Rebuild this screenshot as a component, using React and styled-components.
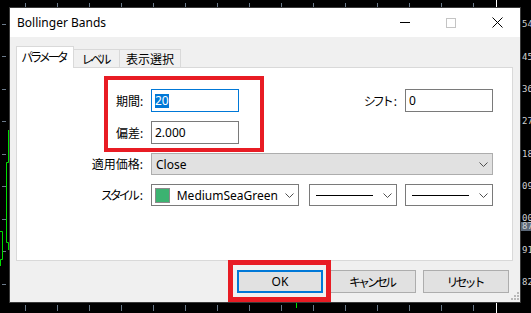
import React from 'react';
import styled, { createGlobalStyle } from 'styled-components';

const UI_FONT = `"Noto Sans", "Noto Sans CJK JP", sans-serif`;

const GlobalStyle = createGlobalStyle`
  html, body { margin: 0; padding: 0; background: #000; }
  body { width: 531px; height: 313px; overflow: hidden; font-family: ${UI_FONT}; }
`;

const Desktop = styled.div`
  position: relative;
  width: 531px;
  height: 313px;
  background: #000;
  overflow: hidden;
`;

const ChartLayer = styled.svg`
  position: absolute;
  left: 0;
  top: 0;
`;

const PriceLabel = styled.span`
  position: absolute;
  left: 521px;
  font-family: "DejaVu Sans Mono", monospace;
  font-size: 9px;
  line-height: 9px;
  padding: 0 1px;
  color: #d0d0d0;
  background: ${(p) => (p.$active ? '#5b6878' : 'transparent')};
`;

const Dialog = styled.div`
  position: absolute;
  left: 9px;
  top: 7px;
  width: 512px;
  height: 296px;
  box-sizing: border-box;
  border: 1px solid #3a3a3a;
  background: #f0f0f0;
  display: flex;
  flex-direction: column;
  font-family: ${UI_FONT};
  font-size: 12px;
  color: #000;
`;

const Kana = styled.span`
  letter-spacing: -3px;
  margin-right: 3px;
`;

const TitleBar = styled.div`
  height: 29px;
  background: #fff;
  display: flex;
  align-items: center;
`;

const Title = styled.div`
  flex: 1;
  padding-left: 7px;
  font-size: 12px;
`;

const CaptionButton = styled.div`
  width: 46px;
  height: 29px;
  display: flex;
  align-items: center;
  justify-content: center;
`;

const Body = styled.div`
  flex: 1;
  display: flex;
  flex-direction: column;
  padding: 9px 7px 0 6px;
`;

const TabStrip = styled.div`
  display: flex;
  align-items: flex-end;
  height: 21px;
`;

const Tab = styled.div`
  box-sizing: border-box;
  width: ${(p) => p.$w}px;
  height: ${(p) => (p.$active ? 22 : 18)}px;
  margin-bottom: ${(p) => (p.$active ? -1 : 0)}px;
  margin-left: ${(p) => (p.$first ? 0 : -1)}px;
  position: relative;
  z-index: ${(p) => (p.$active ? 2 : 1)};
  background: ${(p) => (p.$active ? '#fff' : '#f0f0f0')};
  border: 1px solid #d9d9d9;
  border-bottom: none;
  display: flex;
  align-items: center;
  justify-content: center;
  padding-bottom: ${(p) => (p.$active ? 2 : 0)}px;
  white-space: nowrap;
`;

const Panel = styled.div`
  box-sizing: border-box;
  height: 194px;
  background: #fff;
  border: 1px solid #d9d9d9;
  padding: 21px 19px 0 0;
  display: flex;
  flex-direction: column;
  gap: 9px;
`;

const Row = styled.div`
  display: flex;
  align-items: center;
  height: ${(p) => p.$h}px;
`;

const Label = styled.span`
  box-sizing: border-box;
  width: ${(p) => (p.$w ? `${p.$w}px` : 'auto')};
  text-align: ${(p) => p.$align || 'left'};
  padding-left: ${(p) => p.$pl || 0}px;
  padding-right: ${(p) => p.$pr || 0}px;
  white-space: nowrap;
`;

const Spacer = styled.div`
  flex: 1;
`;

const TextBox = styled.div`
  box-sizing: border-box;
  width: ${(p) => p.$w}px;
  height: 100%;
  background: #fff;
  border: 1px solid ${(p) => (p.$focused ? '#0078d7' : '#7a7a7a')};
  display: flex;
  align-items: center;
  padding-left: 3px;
`;

const Selected = styled.span`
  background: #0078d7;
  color: #fff;
  line-height: 14px;
`;

const ComboBox = styled.div`
  box-sizing: border-box;
  width: ${(p) => (p.$w ? `${p.$w}px` : 'auto')};
  flex: ${(p) => (p.$w ? 'none' : 1)};
  margin-left: ${(p) => p.$ml || 0}px;
  height: 100%;
  background: ${(p) => (p.$gray ? '#e1e1e1' : '#fff')};
  border: 1px solid ${(p) => (p.$gray ? '#adadad' : '#7a7a7a')};
  display: flex;
  align-items: center;
  padding: 0 4px 0 ${(p) => p.$pl ?? 4}px;
  gap: 7px;
`;

const ComboValue = styled.div`
  flex: 1;
  display: flex;
  align-items: center;
  gap: 7px;
  white-space: nowrap;
  overflow: hidden;
`;

const Swatch = styled.span`
  box-sizing: border-box;
  width: 16px;
  height: 15px;
  background: ${(p) => p.$color};
  border: 1px solid #8a8a8a;
`;

const LineSample = styled.span`
  width: 57px;
  height: 1px;
  background: #000;
`;

const ButtonRow = styled.div`
  display: flex;
  justify-content: flex-end;
  gap: 7px;
  margin-top: 9px;
  padding-right: 4px;
`;

const Button = styled.div`
  box-sizing: border-box;
  width: 86px;
  height: 23px;
  background: #e1e1e1;
  border: ${(p) => (p.$default ? '2px solid #0078d7' : '1px solid #adadad')};
  display: flex;
  align-items: center;
  justify-content: center;
  white-space: nowrap;
`;

const Highlight = styled.div`
  position: absolute;
  left: ${(p) => p.$x}px;
  top: ${(p) => p.$y}px;
  width: ${(p) => p.$w}px;
  height: ${(p) => p.$h}px;
  box-sizing: border-box;
  border: ${(p) => p.$t}px solid #e81c24;
  pointer-events: none;
`;

const Grip = styled.svg`
  position: absolute;
  right: 1px;
  bottom: 2px;
`;

const Chevron = () => (
  <svg width="9" height="5" viewBox="0 0 9 5">
    <path d="M0.5 0.5 L4.5 4.5 L8.5 0.5" fill="none" stroke="#505050" strokeWidth="1" />
  </svg>
);

const tickXs = Array.from({ length: 15 }, (_, i) => 25 + i * 32);
const leftTickYs = [24, 56, 89, 121, 154, 186, 219, 251, 284];
const prices = [
  { t: '540', y: 20 },
  { t: '450', y: 53 },
  { t: '360', y: 85 },
  { t: '270', y: 117 },
  { t: '180', y: 150 },
  { t: '090', y: 182 },
  { t: '000', y: 214 },
  { t: '875', y: 222, active: true },
  { t: '910', y: 246 },
  { t: '820', y: 278 },
];

export default function App() {
  return (
    <>
      <GlobalStyle />
      <Desktop>
        <ChartLayer width="531" height="313" viewBox="0 0 531 313">
          {tickXs.map((x) => (
            <line key={`t${x}`} x1={x + 0.5} y1="3" x2={x + 0.5} y2="7" stroke="#6b7a8a" />
          ))}
          {tickXs.map((x) => (
            <line key={`b${x}`} x1={x + 0.5} y1="305" x2={x + 0.5} y2="311" stroke="#6b7a8a" />
          ))}
          {leftTickYs.map((y) => (
            <line key={`l${y}`} x1="2" y1={y + 0.5} x2="6" y2={y + 0.5} stroke="#6b7a8a" />
          ))}
          <line x1="496.5" y1="0" x2="496.5" y2="7" stroke="#fff" />
          <line x1="496.5" y1="303" x2="496.5" y2="313" stroke="#fff" />
          <line x1="296.5" y1="303" x2="296.5" y2="308" stroke="#00e000" />
          <path d="M8.5 130 V162.5 H6.5 V242.5 H8.5 V250" fill="none" stroke="#00e000" />
          <path d="M0 231.5 H2.5 V259.5 H0.5 V266" fill="none" stroke="#00e000" />
        </ChartLayer>
        {prices.map((p) => (
          <PriceLabel key={p.t} $active={p.active} style={{ top: p.y }}>
            {p.t}
          </PriceLabel>
        ))}

        <Dialog>
          <TitleBar>
            <Title>Bollinger Bands</Title>
            <CaptionButton>
              <svg width="10" height="1" viewBox="0 0 10 1">
                <rect width="10" height="1" fill="#000" />
              </svg>
            </CaptionButton>
            <CaptionButton>
              <svg width="10" height="10" viewBox="0 0 10 10">
                <rect x="0.5" y="0.5" width="9" height="9" fill="none" stroke="#c4c4c4" />
              </svg>
            </CaptionButton>
            <CaptionButton>
              <svg width="11" height="11" viewBox="0 0 11 11">
                <path d="M0.5 0.5 L10.5 10.5 M10.5 0.5 L0.5 10.5" stroke="#000" strokeWidth="1" />
              </svg>
            </CaptionButton>
          </TitleBar>

          <Body>
            <TabStrip>
              <Tab $w={58} $active $first>
                <Kana>パラメータ</Kana>
              </Tab>
              <Tab $w={47}>
                <Kana>レベル</Kana>
              </Tab>
              <Tab $w={62}>表示選択</Tab>
            </TabStrip>

            <Panel>
              <Row $h={23}>
                <Label $w={134} $pl={99}>期間:</Label>
                <TextBox $w={88} $focused>
                  <Selected>20</Selected>
                </TextBox>
                <Spacer />
                <Label $pr={8}>
                  <Kana>シフト</Kana>:
                </Label>
                <TextBox $w={88}>0</TextBox>
              </Row>
              <Row $h={23}>
                <Label $w={134} $pl={99}>偏差:</Label>
                <TextBox $w={88}>2.000</TextBox>
              </Row>
              <Row $h={22}>
                <Label $w={134} $align="right" $pr={8}>適用価格:</Label>
                <ComboBox $gray>
                  <ComboValue>Close</ComboValue>
                  <Chevron />
                </ComboBox>
              </Row>
              <Row $h={22}>
                <Label $w={134} $align="right" $pr={8}>
                  <Kana>スタイル</Kana>:
                </Label>
                <ComboBox $w={148} $pl={3}>
                  <ComboValue>
                    <Swatch $color="#3cb371" />
                    MediumSeaGreen
                  </ComboValue>
                  <Chevron />
                </ComboBox>
                <ComboBox $w={88} $ml={10} $pl={6}>
                  <ComboValue>
                    <LineSample />
                  </ComboValue>
                  <Chevron />
                </ComboBox>
                <ComboBox $w={88} $ml={8} $pl={6}>
                  <ComboValue>
                    <LineSample />
                  </ComboValue>
                  <Chevron />
                </ComboBox>
              </Row>
            </Panel>

            <ButtonRow>
              <Button $default>OK</Button>
              <Button>
                <Kana>キャンセル</Kana>
              </Button>
              <Button>
                <Kana>リセット</Kana>
              </Button>
            </ButtonRow>
          </Body>

          <Grip width="8" height="8" viewBox="0 0 8 8">
            {[
              [6, 0],
              [3, 3],
              [6, 3],
              [0, 6],
              [3, 6],
              [6, 6],
            ].map(([x, y]) => (
              <rect key={`${x}-${y}`} x={x} y={y} width="2" height="2" fill="#b8b8b8" />
            ))}
          </Grip>

          <Highlight $x={94} $y={68} $w={160} $h={76} $t={4} />
          <Highlight $x={218} $y={252} $w={103} $h={42} $t={5} />
        </Dialog>
      </Desktop>
    </>
  );
}
